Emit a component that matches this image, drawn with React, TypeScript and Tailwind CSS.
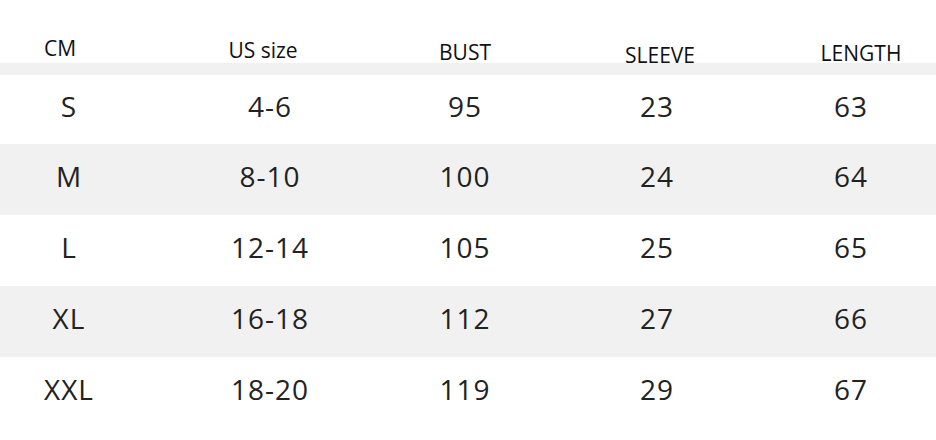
const rows = [
  { size: "S", us: "4-6", bust: "95", sleeve: "23", length: "63" },
  { size: "M", us: "8-10", bust: "100", sleeve: "24", length: "64" },
  { size: "L", us: "12-14", bust: "105", sleeve: "25", length: "65" },
  { size: "XL", us: "16-18", bust: "112", sleeve: "27", length: "66" },
  { size: "XXL", us: "18-20", bust: "119", sleeve: "29", length: "67" },
];

export default function App() {
  return (
    <div className="w-[936px] h-[440px] bg-white font-['Open_Sans','Noto_Sans',sans-serif] overflow-hidden">
      {/* header */}
      <div className="h-[75px] grid grid-cols-[120px_286px_118px_272px_130px] items-start text-[21px] leading-[28px] text-[#111] bg-[linear-gradient(to_bottom,#fff_63px,#f1f1f1_63px)]">
        <div className="text-center pt-[34px]">CM</div>
        <div className="text-center pt-[36px]">US size</div>
        <div className="text-center pt-[38px]">BUST</div>
        <div className="text-center pt-[41px]">SLEEVE</div>
        <div className="text-center pt-[39px]">LENGTH</div>
      </div>

      {/* rows */}
      {rows.map((r, i) => (
        <div
          key={r.size}
          className={`grid grid-cols-[138px_264px_126px_258px_130px] items-center text-[28px] tracking-[1px] text-[#222] ${
            i === 0 ? "h-[69px] pb-[7px]" : "h-[71px] pb-[8px]"
          } ${i % 2 === 1 ? "bg-[#f1f1f1]" : "bg-white"}`}
        >
          <div className="text-center">{r.size}</div>
          <div className="text-center">{r.us}</div>
          <div className="text-center">{r.bust}</div>
          <div className="text-center">{r.sleeve}</div>
          <div className="text-center">{r.length}</div>
        </div>
      ))}
    </div>
  );
}
